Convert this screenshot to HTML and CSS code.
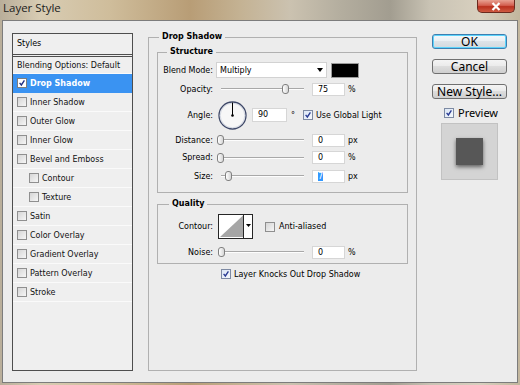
FILE: index.html
```html
<!DOCTYPE html>
<html>
<head>
<meta charset="utf-8">
<title>Layer Style</title>
<link rel="stylesheet" href="styles.css">
</head>
<body>
<div class="window">
  <div class="titlebar">
    <span class="title">Layer Style</span>
    <div class="close">
      <svg width="10" height="9" viewBox="0 0 10 9"><path d="M1.5 1 L8.5 8 M8.5 1 L1.5 8" stroke="#fff" stroke-width="2.2" fill="none"/></svg>
    </div>
  </div>
  <div class="client">
    <div class="styles-panel">
      <div class="panel-head">Styles</div>
      <div class="item blending">Blending Options: Default</div>
      <div class="item selected"><span class="cb checked white"><svg viewBox="0 0 10 10"><path d="M2 4.8 L4.2 7.5 L8 1.8" stroke="#1f2f86" stroke-width="1.7" fill="none"/></svg></span>Drop Shadow</div>
      <div class="item"><span class="cb"></span>Inner Shadow</div>
      <div class="item"><span class="cb"></span>Outer Glow</div>
      <div class="item"><span class="cb"></span>Inner Glow</div>
      <div class="item"><span class="cb"></span>Bevel and Emboss</div>
      <div class="item sub"><span class="cb"></span>Contour</div>
      <div class="item sub"><span class="cb"></span>Texture</div>
      <div class="item"><span class="cb"></span>Satin</div>
      <div class="item"><span class="cb"></span>Color Overlay</div>
      <div class="item"><span class="cb"></span>Gradient Overlay</div>
      <div class="item"><span class="cb"></span>Pattern Overlay</div>
      <div class="item"><span class="cb"></span>Stroke</div>
      <div class="filler"></div>
    </div>

    <fieldset class="group main">
      <legend class="lg-main">Drop Shadow</legend>
      <fieldset class="group inner structure">
        <legend class="lg-structure">Structure</legend>
        <div class="row r-blend">
          <span class="lbl">Blend Mode:</span>
          <div class="select"><span>Multiply</span><span class="arrow"></span></div>
          <div class="swatch"></div>
        </div>
        <div class="row r-opacity">
          <span class="lbl">Opacity:</span>
          <div class="slider"><div class="track"></div><div class="thumb" style="left:66px"></div></div>
          <div class="num">75</div><span class="unit">%</span>
        </div>
        <div class="row r-angle">
          <span class="lbl">Angle:</span>
          <svg class="dial" width="29" height="29" viewBox="0 0 29 29">
            <circle cx="14.5" cy="14.5" r="13.5" fill="#f7f7f7" stroke="#3e4868" stroke-width="1.3"/>
            <circle cx="14.5" cy="14.5" r="12.3" fill="none" stroke="#c9cfdc" stroke-width="0.8"/>
            <line x1="14.5" y1="14.5" x2="14.5" y2="1.5" stroke="#000" stroke-width="1"/>
            <circle cx="14.5" cy="14.5" r="1.3" fill="#000"/>
          </svg>
          <div class="num angle-num">90</div><span class="deg">°</span>
          <span class="cb checked blue gl"><svg viewBox="0 0 10 10"><path d="M2 4.8 L4.2 7.5 L8 1.8" stroke="#2a3c94" stroke-width="1.7" fill="none"/></svg></span>
          <span class="cb-text">Use Global Light</span>
        </div>
        <div class="row r-distance">
          <span class="lbl">Distance:</span>
          <div class="slider"><div class="track"></div><div class="thumb" style="left:1px"></div></div>
          <div class="num">0</div><span class="unit">px</span>
        </div>
        <div class="row r-spread">
          <span class="lbl">Spread:</span>
          <div class="slider"><div class="track"></div><div class="thumb" style="left:1px"></div></div>
          <div class="num">0</div><span class="unit">%</span>
        </div>
        <div class="row r-size">
          <span class="lbl">Size:</span>
          <div class="slider"><div class="track"></div><div class="thumb" style="left:9px"></div></div>
          <div class="num"><span class="sel">7</span></div><span class="unit">px</span>
        </div>
      </fieldset>

      <fieldset class="group inner quality">
        <legend class="lg-quality">Quality</legend>
        <div class="row r-contour">
          <span class="lbl">Contour:</span>
          <svg class="contour" width="35" height="25" viewBox="0 0 35 25">
            <rect x="0.5" y="0.5" width="34" height="24" fill="#fff" stroke="#262626"/>
            <polygon points="2,23 25,1.5 25,23" fill="#a6a6a6"/>
            <line x1="25.5" y1="0" x2="25.5" y2="25" stroke="#262626"/>
            <polygon points="28,10 33,10 30.5,13" fill="#000"/>
          </svg>
          <span class="cb aa"></span>
          <span class="cb-text aa-text">Anti-aliased</span>
        </div>
        <div class="row r-noise">
          <span class="lbl">Noise:</span>
          <div class="slider"><div class="track"></div><div class="thumb" style="left:2px"></div></div>
          <div class="num">0</div><span class="unit">%</span>
        </div>
      </fieldset>

      <div class="row r-knock">
        <span class="cb checked blue"><svg viewBox="0 0 10 10"><path d="M2 4.8 L4.2 7.5 L8 1.8" stroke="#2a3c94" stroke-width="1.7" fill="none"/></svg></span>
        <span class="cb-text">Layer Knocks Out Drop Shadow</span>
      </div>
    </fieldset>

    <div class="side">
      <div class="btn default">OK</div>
      <div class="btn">Cancel</div>
      <div class="btn">New Style...</div>
      <div class="preview-row">
        <span class="cb checked blue"><svg viewBox="0 0 10 10"><path d="M2 4.8 L4.2 7.5 L8 1.8" stroke="#2a3c94" stroke-width="1.7" fill="none"/></svg></span>
        <span class="preview-text">Preview</span>
      </div>
      <div class="preview-box"><div class="preview-square"></div></div>
    </div>
  </div>
</div>
</body>
</html>
```

FILE: styles.css
```css
* { box-sizing: border-box; }
html, body { margin: 0; padding: 0; }
body {
  width: 520px;
  height: 385px;
  overflow: hidden;
  background: linear-gradient(90deg, #b9ae9a 0px, #d8ccb3 40px, #cfbd9b 110px, #b89d76 190px, #c4b293 240px, #cbc2b0 290px, #b4ae9f 340px, #a29d90 390px, #c9c3b4 430px, #d8d0bf 480px, #c2b69d 520px);
  font-family: "DejaVu Sans", sans-serif;
  font-size: 8px;
  color: #000;
}
.window { display: flex; flex-direction: column; height: 385px; }

.titlebar {
  height: 20px;
  display: flex;
  justify-content: space-between;
  align-items: flex-start;
  padding-left: 3px;
  padding-right: 5px;
}
.title {
  font-family: "Open Sans", sans-serif;
  font-size: 11.5px;
  line-height: 12px;
  margin-top: 2px;
  color: #1c1c1c;
}
.close {
  width: 38px;
  height: 13px;
  border: 1px solid #6b2a1e;
  border-top: none;
  border-radius: 0 0 5px 5px;
  background: linear-gradient(#e8a192, #d35f4f 45%, #b9301e 55%, #cf5a41);
  display: flex;
  align-items: center;
  justify-content: center;
}

.client {
  margin: 0 2px;
  height: 363px;
  border: 1px solid #7c7c7c;
  background: #ececec;
  display: flex;
  align-items: flex-start;
  padding: 11px 0 0 9px;
}

/* styles list */
.styles-panel {
  width: 121px;
  height: 338px;
  margin-top: 1px;
  border: 1px solid #4e4e4e;
  background: #efefef;
  display: flex;
  flex-direction: column;
  flex: none;
}
.panel-head {
  height: 23px;
  line-height: 20px;
  padding-left: 4px;
  border-bottom: 3px double #4e4e4e;
}
.item {
  height: 19px;
  display: flex;
  align-items: center;
  padding-left: 4px;
  border-bottom: 1px solid #fafafa;
  color: #111;
  white-space: nowrap;
}
.item .cb { margin-right: 3px; }
.item.blending { height: 17px; }
.item.sub { padding-left: 16px; }
.item.selected {
  background: #3a93f2;
  border-bottom-color: #3a93f2;
  color: #fff;
  font-weight: bold;
}
.filler { flex: 1; }

/* checkboxes */
.cb {
  width: 10px;
  height: 10px;
  flex: none;
  border: 1px solid #8f8f8f;
  background: linear-gradient(135deg, #d6d6d6, #f6f6f6);
  display: inline-flex;
}
.cb svg { width: 8px; height: 8px; }
.cb.white { background: #fff; border-color: #7d7d7d; }
.cb.blue { background: linear-gradient(135deg, #dbe6f5, #f4f8fd); border-color: #7d8aa3; }
.cb-text { margin-left: 3px; white-space: nowrap; }

/* group boxes */
.group {
  margin: 0;
  border: 1px solid #b0b0b0;
  min-width: 0;
}
.group legend {
  font-weight: bold;
  font-size: 8px;
  line-height: 10px;
  padding: 0 3px;
}
.main {
  width: 269px;
  height: 339px;
  margin-left: 15px;
  padding: 0 8px;
  flex: none;
}
.lg-main { margin-left: 2px; }
.inner { width: 251px; padding: 0; }
.lg-structure { margin-left: 9px; }
.lg-quality { margin-left: 11px; }
.structure { margin-top: 5px; padding-top: 5px; padding-bottom: 7px; }
.quality { margin-top: 6px; padding-top: 5px; padding-bottom: 1px; }

.row { display: flex; align-items: center; white-space: nowrap; }
.lbl { width: 55px; text-align: right; flex: none; }
.r-blend { height: 16px; }
.r-opacity { height: 20px; margin-top: 1px; }
.r-angle { height: 30px; margin-top: 1px; }
.r-distance { height: 18px; margin-top: 1px; }
.r-spread { height: 17px; }
.r-size { height: 18px; margin-top: 1px; }
.r-contour { height: 25px; }
.r-noise { height: 20px; margin-top: 3px; }
.r-knock { height: 14px; margin-top: 3px; padding-left: 64px; }

.select {
  margin-left: 3px;
  width: 111px;
  height: 16px;
  background: #fff;
  border: 1px solid #d2d2d2;
  display: flex;
  align-items: center;
  padding-left: 3px;
}
.arrow {
  margin-left: auto;
  margin-right: 3px;
  width: 0;
  height: 0;
  border-left: 3px solid transparent;
  border-right: 3px solid transparent;
  border-top: 4px solid #000;
}
.swatch {
  margin-left: 4px;
  width: 28px;
  height: 15px;
  background: #000;
  border: 1px solid #9a9a9a;
}

.slider {
  margin-left: 3px;
  width: 90px;
  height: 12px;
  position: relative;
  display: flex;
  align-items: center;
  flex: none;
}
.track {
  margin-left: 5px;
  width: 83px;
  height: 2px;
  border-top: 1px solid #a8a8a8;
  border-bottom: 1px solid #fdfdfd;
}
.thumb {
  position: absolute;
  top: 1px;
  width: 7px;
  height: 10px;
  border: 1px solid #808080;
  border-radius: 3px;
  background: linear-gradient(90deg, #ffffff, #d5d5d5);
}
.num {
  margin-left: 6px;
  width: 33px;
  height: 13px;
  background: #fff;
  border: 1px solid #d6d6d6;
  padding-left: 5px;
  line-height: 11px;
  flex: none;
}
.sel { background: #3399ff; color: #fff; }
.unit { margin-left: 3px; }

.dial { margin-left: 5px; flex: none; }
.angle-num { margin-left: 5px; width: 35px; height: 14px; line-height: 12px; }
.deg { margin-left: 4px; }
.gl { margin-left: 8px; }

.contour { margin-left: 5px; flex: none; }
.aa { margin-left: 12px; }
.aa-text { margin-left: 4px; }

/* side buttons */
.side {
  width: 75px;
  margin-left: 15px;
  margin-top: 2px;
  flex: none;
}
.btn {
  width: 75px;
  height: 15px;
  border: 1px solid #707070;
  border-radius: 3px;
  background: linear-gradient(#f4f4f4, #ebebeb 45%, #dddddd 50%, #cfcfcf);
  font-family: "Noto Sans", sans-serif;
  font-size: 12px;
  line-height: 13px;
  text-align: center;
  color: #000;
  margin-bottom: 10px;
}
.btn.default {
  border-color: #3c7fb1;
  box-shadow: inset 0 0 0 1px #5cd3fb;
  background: linear-gradient(#f4f9fc, #eaeff3 45%, #dde3e8 50%, #d2d9de);
}
.preview-row {
  display: flex;
  align-items: center;
  height: 11px;
  margin-top: -2px;
  padding-left: 12px;
}
.preview-text {
  margin-left: 4px;
  font-family: "Noto Sans", sans-serif;
  font-size: 11px;
  line-height: 11px;
}
.preview-box {
  margin-top: 5px;
  margin-left: 9px;
  width: 57px;
  height: 57px;
  background: #d4d4d4;
  border: 1px solid #c2c2c2;
  display: flex;
  align-items: center;
  justify-content: center;
}
.preview-square {
  width: 27px;
  height: 27px;
  background: #575757;
  box-shadow: 0 2px 4px rgba(0, 0, 0, 0.55);
}
```
